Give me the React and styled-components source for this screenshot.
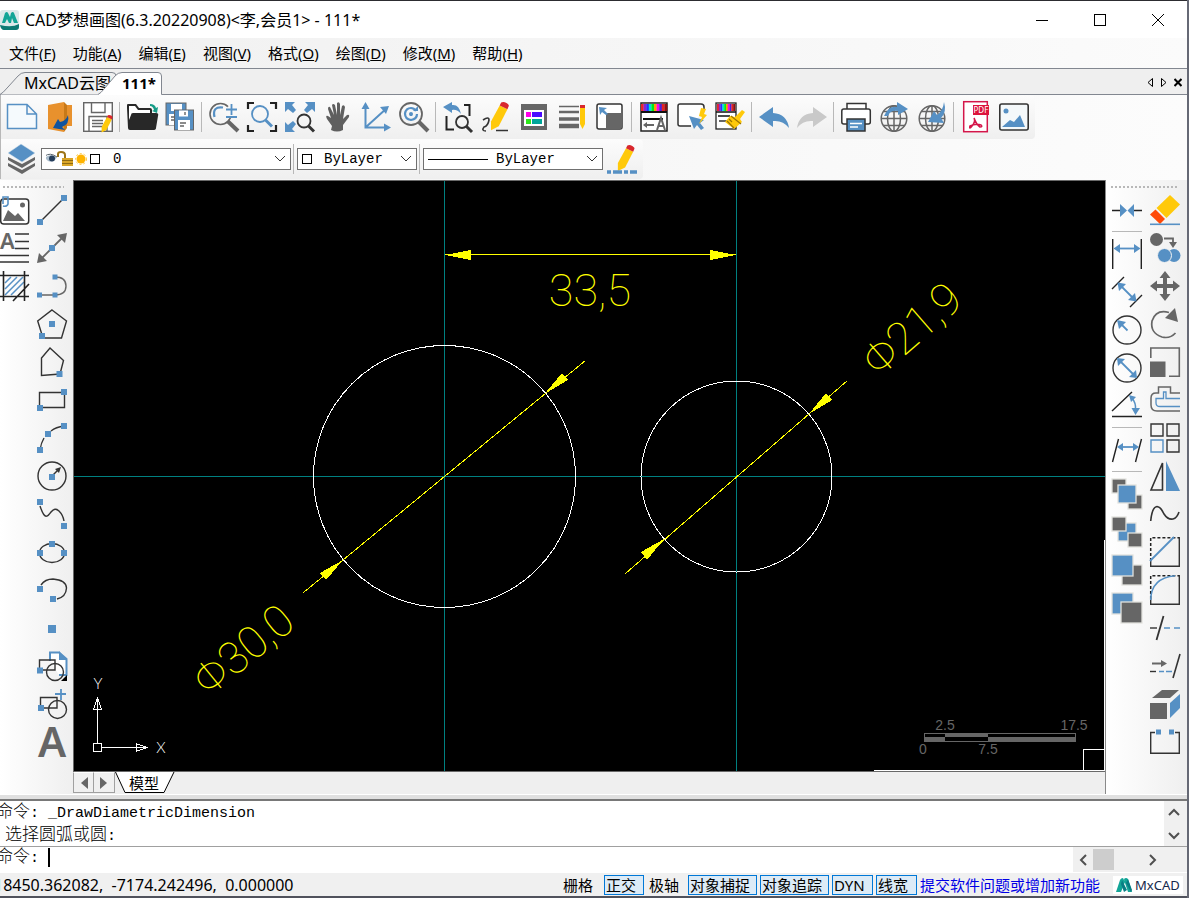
import React from 'react';
import styled, { createGlobalStyle, css } from 'styled-components';

const B = '#5690c4';
const G = '#666666';
const K = '#333333';
const UI = '"Noto Sans", "Noto Sans CJK SC", sans-serif';
const MONO = '"Liberation Mono", "Noto Sans CJK SC", monospace';

const GlobalStyle = createGlobalStyle`
  * { box-sizing: border-box; }
  html, body { margin: 0; }
  body { background: #666975; font-family: ${UI}; font-size: 16px; color: #000; }
  button, input, select, textarea { font: inherit; color: inherit; margin: 0; }
`;

/* ---------- window frame ---------- */

const Window = styled.div`
  display: flex;
  flex-direction: column;
  height: 100vh;
  min-height: 760px;
  margin-right: 2px;
  border-top: 1px solid #2c2c30;
  border-bottom: 2px solid #50525c;
  background: #f0f0f0;
  overflow: hidden;
`;

const TitleBar = styled.header`
  display: flex;
  align-items: center;
  height: 37px;
  flex: none;
  background: #fff;
`;

const Title = styled.h1`
  margin: 0;
  padding-left: 5px;
  flex: 1;
  font-size: 16px;
  line-height: 20px;
  font-weight: 400;
  white-space: nowrap;
`;

const WindowButton = styled.button`
  display: flex;
  align-items: center;
  justify-content: center;
  width: 58px;
  height: 37px;
  padding: 0;
  border: 0;
  background: transparent;
`;

const MenuBar = styled.nav`
  display: flex;
  align-items: center;
  gap: 17px;
  height: 31px;
  flex: none;
  padding-left: 9px;
  border-bottom: 1px solid #828790;
  background: linear-gradient(90deg, #f0f0f0, #fbfbfb);
`;

const MenuItem = styled.button`
  padding: 0;
  border: 0;
  background: transparent;
  font-size: 15px;
  line-height: 20px;
  white-space: nowrap;
`;

const TabStrip = styled.div`
  display: flex;
  align-items: flex-end;
  height: 26px;
  flex: none;
  border-bottom: 1px solid #828790;
  background: #efefef;
`;

const DocTab = styled.button`
  position: relative;
  height: 23px;
  width: ${(p) => p.$width}px;
  margin-bottom: -1px;
  margin-left: ${(p) => (p.$active ? -20 : 0)}px;
  padding: 0 0 2px 24px;
  border: 0;
  background: transparent;
  font-size: ${(p) => (p.$active ? 15 : 16)}px;
  line-height: 20px;
  font-weight: ${(p) => (p.$active ? 700 : 400)};
  text-align: left;
  white-space: nowrap;
  & > svg { position: absolute; left: 0; top: 0; }
  & > span { position: relative; }
`;

const TabTools = styled.div`
  display: flex;
  align-items: center;
  gap: 6px;
  height: 24px;
  margin-left: auto;
  padding-right: 5px;
`;

const TinyButton = styled.button`
  display: flex;
  padding: 0;
  border: 0;
  background: transparent;
`;

/* ---------- toolbars ---------- */

const ToolArea = styled.div`
  flex: none;
  padding-bottom: 1px;
  background: linear-gradient(90deg, #f2f2f2, #fcfcfc);
`;

const Toolbar = styled.div`
  display: flex;
  align-items: center;
  width: max-content;
  height: ${(p) => p.$height}px;
  padding-left: 3px;
  padding-right: 2px;
  border-radius: 0 4px 4px 0;
  background:
    linear-gradient(90deg, #b8b8b8 1px, transparent 1px),
    linear-gradient(#fcfcfc, #efefef);
`;

const Tool = styled.button`
  display: flex;
  align-items: center;
  justify-content: ${(p) => (p.$edge ? 'flex-start' : 'center')};
  width: ${(p) => (p.$edge ? 33 : 38)}px;
  height: 38px;
  padding: 0;
  border: 0;
  background: transparent;
  flex: none;
`;

const Divider = styled.span`
  flex: none;
  ${(p) =>
    p.$horizontal
      ? css`
          height: 6px;
          margin: 0 4px;
          background: linear-gradient(#b8b8b8, #b8b8b8) 0 2px / 100% 1px no-repeat;
        `
      : css`
          width: 6px;
          height: 30px;
          background: linear-gradient(#b8b8b8, #b8b8b8) 2px 0 / 1px 100% no-repeat;
        `}
`;

const Combo = styled.div`
  display: flex;
  align-items: center;
  width: ${(p) => p.$width}px;
  height: 22px;
  padding-left: 4px;
  border: 1px solid #707070;
  background: #fff;
  & > svg { flex: none; }
  & > svg:last-child { margin-right: 4px; pointer-events: none; }
`;

const ComboSelect = styled.select`
  flex: 1;
  min-width: 0;
  height: 20px;
  padding: 0 0 0 ${(p) => p.$pad}px;
  border: 0;
  outline: 0;
  appearance: none;
  background: transparent;
  font-family: ${MONO};
  font-size: 14px;
`;

/* ---------- work area ---------- */

const WorkArea = styled.main`
  display: flex;
  flex: 1;
  min-height: 0;
`;

const Dock = styled.aside`
  flex: none;
  width: ${(p) => p.$width}px;
  padding-left: ${(p) => p.$pad}px;
  background: linear-gradient(90deg, #fff, #efefef);
`;

const Grip = styled.div`
  height: 11px;
  margin: 0 9px 0 3px;
  background: linear-gradient(90deg, #b8b8b8 2px, transparent 2px) 0 6px / 4px 2px repeat-x;
`;

const DockColumns = styled.div`
  display: flex;
`;

const DockColumn = styled.div`
  display: flex;
  flex-direction: column;
`;

const Center = styled.section`
  display: flex;
  flex-direction: column;
  flex: 1;
  min-width: 0;
  border-right: 1px solid #8a8a8a;
`;

const Canvas = styled.div`
  position: relative;
  flex: 1;
  min-height: 0;
  overflow: hidden;
  border-top: 1px solid #696969;
  border-left: 1px solid #696969;
  border-bottom: 1px solid #696969;
  background: #000;
`;

const Drawing = styled.svg`
  position: absolute;
  inset: 0;
  width: 100%;
  height: 100%;
`;

const UcsIcon = styled.svg`
  position: absolute;
  left: 16px;
  bottom: 15px;
`;

const ScaleRuler = styled.svg`
  position: absolute;
  right: 0;
  bottom: 0;
`;

const SheetBar = styled.div`
  display: flex;
  height: 22px;
  flex: none;
  background: #efefef;
`;

const SheetArrow = styled.button`
  display: flex;
  align-items: center;
  justify-content: center;
  width: 21px;
  height: 21px;
  padding: 0 0 0 2px;
  border: 1px solid #a0a0a0;
  border-top-color: #fff;
  background: #f0f0f0;
  & + & { border-left: 0; padding: 0 2px 0 0; }
`;

const SheetTab = styled.button`
  position: relative;
  width: 62px;
  height: 21px;
  padding: 0 4px 0 0;
  border: 0;
  background: transparent;
  font-size: 15px;
  line-height: 20px;
  & > svg { position: absolute; left: 0; top: 0; }
  & > span { position: relative; }
`;

/* ---------- command line ---------- */

const Splitter = styled.div`
  height: 7px;
  flex: none;
  border-top: 1px solid #fff;
  border-bottom: 2px solid #787878;
  background: #e0e0e0;
`;

const LogRow = styled.div`
  display: flex;
  height: 46px;
  flex: none;
  border-bottom: 1px solid #a0a0a0;
  background: #fff;
`;

const Log = styled.div`
  flex: 1;
  padding-top: 1px;
  overflow: hidden;
  font-family: ${MONO};
  font-size: 15px;
  line-height: 22px;
  text-indent: -4px;
  white-space: pre;
`;

const Hanzi = styled.span`
  font-size: 17px;
  font-weight: 300;
`;

const LogScroll = styled.div`
  display: flex;
  flex-direction: column;
  justify-content: space-between;
  align-items: center;
  width: 23px;
  padding: 5px 4px 4px 0;
  background: #f0f0f0;
`;

const PromptRow = styled.div`
  display: flex;
  height: 25px;
  flex: none;
  background: #f0f0f0;
`;

const Prompt = styled.label`
  display: flex;
  flex: 1;
  overflow: hidden;
  background: #fff;
  font-family: ${MONO};
  font-size: 15px;
  line-height: 22px;
  text-indent: -4px;
  white-space: pre;
`;

const PromptInput = styled.input`
  flex: 1;
  height: 19px;
  margin-top: 1px;
  padding: 0;
  border: 0;
  border-left: 2px solid #000;
  outline: 0;
  background: transparent;
  text-indent: 0;
`;

const PromptScroll = styled.div`
  display: flex;
  align-items: center;
  width: 91px;
  margin-right: 23px;
  padding: 0 5px 0 4px;
`;

const Thumb = styled.span`
  width: 21px;
  height: 21px;
  margin-left: 4px;
  margin-right: auto;
  background: #cdcdcd;
`;

const StatusBar = styled.footer`
  display: flex;
  align-items: center;
  gap: 3px;
  height: 24px;
  flex: none;
  padding-right: 4px;
  border-top: 1px solid #fff;
  font-size: 15px;
  white-space: nowrap;
`;

const Coordinates = styled.output`
  flex: 1;
  min-width: 0;
  overflow: hidden;
  font-size: 16px;
  line-height: 20px;
  text-indent: -6px;
  white-space: pre;
`;

const Toggle = styled.button`
  width: ${(p) => p.$width}px;
  height: 20px;
  padding: 0 0 0 1px;
  border: 1px solid ${(p) => (p.$on ? '#0078d7' : 'transparent')};
  background: ${(p) => (p.$on ? '#dcebf7' : 'transparent')};
  font-size: 15px;
  line-height: 18px;
  text-align: left;
  overflow: hidden;
`;

const Feedback = styled.a`
  width: 190px;
  color: #0000e6;
  line-height: 20px;
  text-decoration: none;
`;

const Brand = styled.span`
  display: flex;
  align-items: center;
  gap: 3px;
  width: 70px;
  height: 18px;
  padding-left: 3px;
  background: #fff;
  color: #14284b;
  font-size: 13px;
  line-height: 18px;
`;

/* ---------- icon parts ---------- */

const Sq = ({ x, y, s = 6 }) => <rect x={x - s / 2} y={y - s / 2} width={s} height={s} fill={B} />;
const Box = ({ x, y, s, c }) => <rect x={x} y={y} width={s} height={s} fill={c} stroke="#e2e2de" strokeWidth="1.3" />;
const L = ({ d, c = K, w = 1.4, ...rest }) => <path d={d} fill="none" stroke={c} strokeWidth={w} {...rest} />;
const F = ({ d, c = B }) => <path d={d} fill={c} />;
const Circ = ({ x = 15, y = 15, r = 14, c = K, w = 1.4, f = 'none' }) => (
  <circle cx={x} cy={y} r={r} fill={f} stroke={c} strokeWidth={w} />
);
const Handle = ({ d }) => <path d={d} stroke={G} strokeWidth="4" />;
const Pencil = ({ s = 1, x = 0, y = 0 }) => (
  <g transform={`translate(${x} ${y}) scale(${s})`}>
    <F c="#ffc90a" d="M10 3.500L18 7.500L9 25L1 29V20Z" />
    <F c="#d8272d" d="M11.500 0.500Q14 -0.500 17 1Q20.500 3 19 5L18 7.500L10 3.500Z" />
  </g>
);
const Spectrum = ({ w }) => (
  <g>
    {['#e8252c', '#8a25d0', '#2530ff', '#00e4d2', '#00e817', '#ff9d00', '#ff00e8', '#4a22d8', '#e82020', '#8c1111'].map((c, i) => (
      <rect key={c} x={2 + (i * (w - 4)) / 10} y="2" width={(w - 4) / 10 + 0.2} height="7" fill={c} />
    ))}
  </g>
);
const Globe = () => (
  <g fill="none" stroke={G} strokeWidth="1.500">
    <circle cx="15" cy="16.500" r="12.800" />
    <ellipse cx="15" cy="16.500" rx="6.500" ry="12.800" />
    <path d="M15 4V29M2.200 16.500H28M4 9.500H26M4 23.500H26" />
  </g>
);

const ICONS = {
  newFile: <path d="M.5 2.5H20L29.500 12V26.500H.5ZM20 2.500V12H29.500" fill="#f5fafd" stroke={B} strokeWidth="1.500" />,
  open: <><F c="#e8912d" d="M3 3L19 0V30L3 27ZM19 3H27V24H19Z" /><F c="#c87918" d="M19 0L22 3V26L19 30Z" /><F c="#10539f" d="M23 13Q25 22 17 25L20 28L8 26L13 17L15 20Q21 19 23 13Z" /></>,
  save: <><rect x=".7" y=".7" width="28.600" height="28.600" fill="#fff" stroke={G} strokeWidth="1.400" /><L c={G} d="M8.500 1V10.500H22V1M6 29V14.500H24V29M9 18.500H20M9 21.500H20M9 24.500H20" /><Pencil s={0.6} x={18} y={13} /></>,
  folder: <><F c="#282828" d="M0 6V3Q0 2 1 2H9L12 6H23Q25 6 25 8V11H29Q32 11 31 14L29 26Q29 28 26 28H3Q1 28 1 26Z" /><F c="#fff" d="M2 4H8L11 8H23V11H6Q4 11 4 13L2 18Z" /><F c="#159c87" d="M23 2Q28 2 29 6L31 5L30 11L25 9L27 8Q26 4 23 4Z" /></>,
  saveAll: <><rect x="1" y="1" width="20" height="22" fill={B} stroke={G} /><rect x="6" y="2" width="11" height="7" fill="#fff" /><rect x="4" y="12" width="9" height="11" fill="#fff" /><L c={G} d="M6 15H9M6 18H9" /><rect x="9.500" y="8" width="19" height="20" fill={B} stroke={G} /><rect x="14" y="8.500" width="9" height="6" fill="#fff" /><rect x="13" y="18" width="12" height="10" fill="#fff" /><L c={G} d="M15 21H21M15 24H19M20 10V13" /></>,
  zoomPM: <><Circ x={11.500} y={12} r={10.500} c={G} w={1.600} /><L c={B} w={2.200} d="M5.500 15Q3 4 14 5.500" /><Handle d="M18.500 19L29 29" /><circle cx="23" cy="9" r="6" fill="#f8f8f8" /><L c={B} w={1.800} d="M22.500 2V13M17 7.500H28M17 15H28" /></>,
  zoomWin: <><L w={2.200} c="#222" d="M1 7V1H7M23 1H29V7M29 23V29H23M7 29H1V23" /><Circ x={13} y={12} r={8} c={B} w={1.800} /><path d="M18.500 18L25 24.500" stroke={B} strokeWidth="3" /></>,
  zoomExt: <><F d="M0 0H10L7 3L11 8L8 11L3 7L0 10ZM30 0H20L23 3L19 8L22 11L27 7L30 10ZM0 30H10L7 27L11 22L8 19L3 23L0 20Z" /><Circ x={19} y={19} r={6.500} w={1.800} /><path d="M23.500 24L29 29.500" stroke={K} strokeWidth="3" /></>,
  hand: <F c="#5f5f5f" d="M9 24L4 17Q2 13 5 14L8 16L5 7Q5 4 7 5L11 13L9 3Q10 1 12 3L14 13L14 1Q16 -1 17 2V13L19 4Q21 2 22 5L20 17L24 13Q27 12 26 15L20 23V28Q14 31 8 28Z" />,
  axes: <><L c={B} w={2} d="M4.500 3V25.500H27M5 25L26 6" /><F d="M.5 7L4.500 0L8.500 7ZM23 21.500L30 25.500L23 29.500ZM19 5L28 4L25 12Z" /></>,
  orbit: <><Circ x={12} y={12} r={11} c={G} w={1.800} /><L c={B} w={2.200} d="M18 12Q18 17 12 18Q6 17 6 11.500Q7 6 12 6Q15 6 17 9M12 11V14" /><F d="M14 9H19V4Z" /><circle cx="12" cy="12" r="2" fill={B} /><Handle d="M20 20L29 29" /></>,
  zoomPrev: <><L w={2} c="#222" d="M3.500 14V27.500H11M21 3H26.500V14" /><F d="M0 5L9 0V3Q16 2 18 12Q14 7 9 8V11Z" /><Circ x={19} y={20} r={6} w={1.800} /><path d="M23 24L29 30" stroke={K} strokeWidth="3" /></>,
  sketch: <><L d="M2 18Q8 14 8 18Q7 24 3 25Q0 29 5 29M15 28.500H27" w={1.600} /><Pencil x={9} s={0.97} /></>,
  props: <><rect x="2" y="2" width="26" height="26" fill={G} /><rect x="5" y="8" width="20" height="16" fill="#fff" /><rect x="7" y="10" width="5" height="5" fill="#ff00e8" /><rect x="13" y="10" width="10" height="5" fill="#4b0cff" /><rect x="7" y="17" width="5" height="5" fill="#2de81b" /><rect x="13" y="17" width="10" height="5" fill="#00a69a" /></>,
  linetype: <><L c={G} w={1.500} d="M2 4.500H22" /><L c={G} w={2.500} d="M2 10H22" /><L c={G} w={3.500} d="M2 17H22" /><L c={G} w={4.500} d="M2 24H22" /><F c="#ffc90a" d="M23 6H28V22L25.500 27L23 22Z" /><F c="#d8272d" d="M23 3H28V6H23Z" /></>,
  viewport: <><rect x="2" y="2" width="25" height="25" rx="2" fill="#fff" stroke={K} strokeWidth="1.500" /><F c={G} d="M11 11H27V25Q27 27 25 27H11Z" /><F d="M4 5L12 6L9 8L13 12L11 13L7 10L5 13Z" /></>,
  colorText: <><rect x="2" y="1" width="26" height="28" fill="#fff" stroke="#222" strokeWidth="1.500" /><Spectrum w={30} /><L c="#111" w={1.800} d="M2 10H28M4 17H24" /><L c={G} w={2} d="M7 23H15" /><F c={G} d="M4 23L8 20V26Z" /><L c={G} w={2} d="M18 28L22 16L26 28M19 24H25" /></>,
  quickSelect: <><path d="M14 24H3Q1 24 1 22V4Q1 2 3 2H24Q27 2 27 5V8" fill="#fff" stroke={K} strokeWidth="1.500" /><F d="M12 14L27 18L23 21L27 26L24 28L20 23L17 27Z" /><F c="#ffc90a" d="M24 6L22 14L25 15L22 22L30 13L27 12L29 7Z" /></>,
  matchProps: <><rect x="1" y="1" width="20" height="26" fill="#fff" stroke="#222" strokeWidth="1.300" /><Spectrum w={22} /><L c="#111" d="M1 10H21M3 14H15" /><L c={G} w={2} d="M4 19H13" /><F c="#ffc90a" d="M27 8L30 10L25 17L27 20L19 27L10 20L15 14L20 15Z" /><L c="#9b7300" d="M16 14L26 22M12 19L19 26M14 17L17 20" w={1.200} /></>,
  undo: <F d="M0 15L14 5V11Q28 12 30 26Q24 18 14 19V25Z" />,
  redo: <F c="#c9c9c9" d="M30 15L16 5V11Q2 12 0 26Q6 18 16 19V25Z" />,
  print: <><rect x="6" y="1.500" width="19" height="8" fill="#fff" stroke={K} strokeWidth="1.500" /><rect x=".8" y="7" width="28.500" height="15" rx="2" fill="#fff" stroke={K} strokeWidth="1.500" /><rect x="6" y="17" width="18" height="12" fill={B} stroke={K} strokeWidth="1.500" /><L c="#fff" d="M9 21.500H21M9 25H17" /></>,
  globeOut: <><Globe /><F d="M5 14Q10 3 18 5V0L29 7L19 13V9Q11 8 9 14Z" /></>,
  globeIn: <><Globe /><F d="M27 0Q30 10 24 16L27 21L11 20L17 9L20 13Q26 9 27 0Z" /></>,
  pdf: <><rect x="2.700" y="-.3" width="23.600" height="30" fill="#fff" stroke="#d4164a" strokeWidth="1.500" /><rect x="12" y="3" width="16" height="10" fill="#dc143c" /><text x="12.500" y="11" fontSize="8" fill="#fff" fontFamily="Noto Sans">PDF</text><L c="#d4164a" w={1.600} d="M13 16Q15 19 11 24Q8 28 9 24Q15 21 20 23Q22 25 19 25Q15 22 13 16" /></>,
  picture: <><rect x=".8" y="2" width="28.400" height="26" rx="2" fill="#f4f8fa" stroke={K} strokeWidth="1.600" /><circle cx="7" cy="9" r="2.500" fill={B} /><F d="M3 25L11 18L15 20L21 13L26 25Z" /></>,
  layers: <><F c={G} d="M1 19L15 26L28 19V22L15 30L1 22ZM1 13L15 20L28 13V16L15 24L1 16Z" /><path d="M1 9L14 0L28 9L15 18Z" fill={B} stroke="#dbe6ee" strokeWidth=".5" /></>,
  lineEdit: <><Pencil x={10} y={1} s={0.9} /><path d="M0 28H30" stroke={B} strokeWidth="3.500" strokeDasharray="4 2 9 2" /></>,

  imageRef: <><rect x=".7" y="4" width="28" height="25" rx="3" fill="#fff" stroke={K} strokeWidth="1.500" /><circle cx="22.500" cy="10" r="2.500" fill={G} /><F c={G} d="M3 26L8 15L15 21L18 18L25 26Z" /><L c={B} d="M3 9V2H8V9Q7 12 3 11" w={1.600} /></>,
  mtext: <><text x="0" y="16" fontSize="22" fontWeight="600" fill={G} fontFamily="Noto Sans">A</text><L d="M15 1H29M15 8.500H29M15 15.500H29M0 22.500H29M0 29H29" w={1.600} /></>,
  hatch: <><L c={B} w={1.500} d="M5 12L11 6M5 18L17 6M5 24L23 6M11 24L24 11" /><L w={1.600} c="#222" d="M0 4.500H29M0 25.500H29M3.500 0V30M24.500 0V30M13 30L29 13" /></>,
  line: <><L d="M3 27L27 3" /><Sq x={3} y={27} /><Sq x={27} y={3} /></>,
  ray: <><L c={G} d="M3 27L27 3" w={1.800} /><F c={G} d="M0 30L2 20L10 28ZM30 0L28 10L20 2Z" /><Sq x={15} y={15} /></>,
  pline: <><L c={G} d="M2 24H18M18 6Q29 6 29 15Q29 24 18 24" /><Sq x={2.500} y={24} s={5} /><Sq x={18} y={24} s={5} /><Sq x={18} y={6} s={5} /></>,
  pentagon: <><L d="M15 1L29.500 12L24.500 29H6L.7 12Z" /><Sq x={15} y={15} /><Sq x={5} y={27} /></>,
  polygon: <><L d="M13 1L26.500 13.500L23 27L4.500 28.500V11Z" /><Sq x={22.500} y={27} /></>,
  rect: <><L d="M2.500 7.500H27.500V22.500H2.500Z" /><Sq x={27} y={7} /><Sq x={3} y={23} /></>,
  arc: <><L d="M3 27Q4 20 7 15M14 8Q19 4 27 3" /><Sq x={3} y={27} /><Sq x={11} y={11} /><Sq x={27} y={3} /></>,
  circle: <><Circ /><L d="M15 15L22 8" /><F c={K} d="M24 6L18 8L22 12Z" /><Sq x={15} y={16} /></>,
  spline: <><L d="M3 7Q7 19 10 17Q11 17 14 13Q18 8 22 12Q26 16 27 22" /><Sq x={3} y={3} /><Sq x={27} y={27} /></>,
  ellipse: <><ellipse cx="15" cy="16" rx="12.500" ry="9.500" fill="none" stroke={K} strokeWidth="1.400" /><Sq x={3} y={16} /><Sq x={27} y={16} /><Sq x={15} y={7} /></>,
  ellipseArc: <><L d="M4 10Q8 4 16 4Q29 5 29.500 13Q29 22 20 24" /><Sq x={3} y={14} /><Sq x={16} y={24} /></>,
  point: <Sq x={15} y={16} s={8} />,
  insertBlock: <><path d="M13 10V1.500H22L29.500 8V24H22" fill="#fff" stroke={B} strokeWidth="2" /><F d="M22 0L30 9H22Z" /><L d="M3 19H18V9H2.500V19" /><Circ x={18} y={21} r={8.500} /><F c="#000" d="M30 24V30H24Z" /><Sq x={3} y={19.500} /></>,
  makeBlock: <><L d="M4 19H20V8.500H3.500V19" /><Circ x={20.500} y={20.500} r={9} /><L c={B} w={1.800} d="M24 0V11M18 5H29" /><Sq x={4} y={19} /></>,
  text: <text x="15" y="30" textAnchor="middle" fontSize="42" fontWeight="600" fill={G} fontFamily="Noto Sans">A</text>,

  join: <><L w={1.600} c="#222" d="M0 15.500H9M21 15.500H30" /><F d="M8 9L15 15.500L8 22ZM22 9L15.500 15.500L22 22Z" /></>,
  dimLinear: <><L d="M.7 0V30M29.300 0V30" w={1.400} c="#222" /><L c={B} w={1.800} d="M6 9.500H24" /><F d="M1.500 9.500L8 5V14ZM28.500 9.500L22 5V14Z" /></>,
  dimAligned: <><L d="M0 12L12 0M18 30L30 18" w={1.400} c="#222" /><L c={B} w={1.800} d="M8 8L22 22" /><F d="M5.500 5.500L14 7L7 14ZM24.500 24.500L23 16L16 23Z" /></>,
  dimRadius: <><Circ /><L c={B} w={1.800} d="M15.500 15.500L8 8" /><F d="M5 5L14 7L7 14Z" /></>,
  dimDiameter: <><Circ /><L c={B} w={1.800} d="M8 8L22 22" /><F d="M5 5L13 6L6 13ZM25 25L24 17L17 24Z" /></>,
  dimAngle: <><L d="M0 20L20 1M0 25.500H30" w={1.400} c="#222" /><L c={B} w={1.500} d="M20 7Q24 12 23.500 18" /><F d="M17 4L24 6L19 11ZM23.500 24L19.500 17H28Z" /></>,
  dimOblique: <><L d="M.5 27L6.500 4M23.500 27L29.500 4" w={1.400} c="#222" /><L c={B} w={1.800} d="M8 12H24" /><F d="M5 12L11 8V16ZM27 12L21 8V16Z" /></>,
  orderA: <><Box x={0} y={0} s={14} c={G} /><Box x={16} y={16} s={14} c={G} /><Box x={6} y={6} s={18} c={B} /></>,
  orderB: <><Box x={6} y={6} s={18} c={B} /><Box x={0} y={0} s={14} c={G} /><Box x={16} y={16} s={14} c={G} /></>,
  orderC: <><Box x={10} y={10} s={20} c={G} /><Box x={0} y={0} s={21} c={B} /></>,
  orderD: <><Box x={0} y={0} s={21} c={B} /><Box x={9} y={9} s={21} c={G} /></>,
  erase: <><F c="#ffc90a" d="M20 0L30 9.500L16.500 23L6.500 13Z" /><F c="#ff4a08" d="M5.500 14.500L15 24L10 29L0 19.500Z" /><L c={B} w={1.600} d="M0 29.300H30" /></>,
  copy: <><circle cx="6.500" cy="6.500" r="6.500" fill={G} /><L c={G} d="M14 5.500H23V10" w={1.800} /><F c={G} d="M19 9H27L23 15Z" /><circle cx="24" cy="22.500" r="6.500" fill={B} /><circle cx="14.500" cy="22.500" r="7" fill={B} stroke="#f3f3f3" strokeWidth="1" /></>,
  move: <F c={G} d="M15 0L20.500 7H17V13H23V9.500L30 15L23 20.500V17H17V23H20.500L15 30L9.500 23H13V17H7V20.500L0 15L7 9.500V13H13V7H9.500Z" />,
  rotate: <><L c={G} w={1.700} d="M19 3.500Q6 0 2 12Q0 24 12 28Q20 30 25.500 24" /><F c={G} d="M25 -1L28 13L15 9Z" /></>,
  scale: <><L w={1.600} d="M.8 11V1H29.300V29.300H19" c={G} /><rect x="0" y="14.500" width="15.500" height="15.500" fill={G} /></>,
  offset: <><L c={G} d="M30 8H20.500V2H8.500V8H6Q1 8 1 13V20Q1 26 7 26H30" w={1.500} /><L c={B} d="M30 13.500H16V7H13.500V13.500H6V18Q6 21.500 10 21.500H30" w={1.300} /></>,
  array: <><L d="M1 1H13V13H1ZM17 1H29V13H17ZM17 17H29V29H17Z" /><L c={B} d="M1 17H13V29H1Z" /></>,
  mirror: <><L d="M12.500 2V29H1Z" w={1.600} /><F d="M16 0L30 30H16Z" /></>,
  curve: <><path d="M.7 22Q2 8 7 7.500Q11 8 14 15Q18 21 23 20Q27 19 29 13" fill="none" stroke={K} strokeWidth="1.600" /></>,
  chamfer: <><L d="M29.300 0V29.300H.7V24" /><path d="M.7 24V.7H29" fill="none" stroke="#222" strokeWidth="1.500" strokeDasharray="3 2" /><L c={B} w={1.800} d="M0 24L24 0" /></>,
  fillet: <><L d="M29.300 0V29.300H.7V24" /><path d="M.7 24V.7H29" fill="none" stroke="#222" strokeWidth="1.500" strokeDasharray="3 2" /><L c={B} w={1.600} d="M.7 25Q1 3 25 .7" /></>,
  break: <><L d="M6.500 27L13.500 3" w={1.800} /><L d="M0 15H7" /><L c={B} d="M14 15H20M24 15H30" w={1.600} /></>,
  extend: <><L d="M23 27L30 3" w={1.600} /><L d="M0 20.500H6" /><L c={B} d="M9 20.500H14M16 20.500H22" /><L c={G} w={2} d="M2 12.500H13" /><F c={G} d="M17 12.500L11 9V16Z" /></>,
  solid: <><F c={G} d="M0 14H17V30H0ZM2 9L12 1H29L20 9Z" /><F d="M20 14L30 5V19L20 29Z" /></>,
  breakBox: <><L d="M5 5.500H.7V26.300H29.300V5.500H25" /><Sq x={8.500} y={5} s={5} /><Sq x={21.500} y={5} s={5} /></>,
};

const Icon = ({ name }) => (
  <svg width="30" height="30" viewBox="0 0 30 30" overflow="visible" aria-hidden="true">
    {ICONS[name]}
  </svg>
);

const ToolList = ({ items, edge, horizontal }) =>
  items.map((name, i) =>
    name === '|' ? (
      <Divider key={i} $horizontal={horizontal} />
    ) : (
      <Tool key={i} $edge={edge} type="button" aria-label={name}>
        <Icon name={name} />
      </Tool>
    )
  );

const Logo = ({ size = 16 }) => (
  <svg width={size} height={size} viewBox="0 0 16 16" aria-hidden="true">
    <F c="#12a597" d="M0 15L4 3Q5 1 7 1L9 5L5 15H3ZM8 2Q10 0 12 2L16 15H12L9 6Z" />
    <F c="#087c84" d="M6 3L11 13L8 15L5 7ZM12 2L16 13L15 15L10 6Z" />
  </svg>
);

const AppIcon = () => (
  <svg width="20" height="20" viewBox="0 0 20 20" aria-hidden="true">
    <rect x="0" y="0" width="19" height="19" rx="3" fill="#dce9ea" />
    <F c="#12a597" d="M2 13L5 3Q7 1 8 3L10 7L11 3Q13 1 14 3L18 13H14L12 8L11 13H9L7 9L5 13Z" />
    <F c="#0d7a74" d="M0 15Q12 18 19 14V17Q19 20 16 20H4Q1 20 0 15Z" />
  </svg>
);

const Chevron = ({ dir = 'down', w = 12, heavy, label }) => {
  const d = { down: 'M1 3L6 8L11 3', up: 'M1 9L6 4L11 9', left: 'M9 1L4 6L9 11', right: 'M3 1L8 6L3 11' }[dir];
  return (
    <svg width={w} height={w} viewBox="0 0 12 12" aria-label={label}>
      <path d={d} fill="none" stroke={heavy ? '#505050' : '#333'} strokeWidth={heavy ? 2 : 1} />
    </svg>
  );
};

const LayerMarks = () => (
  <svg width="58" height="16" viewBox="2 0 58 16" aria-hidden="true">
    <path d="M1 7Q5 2 13 6Q10 12 4 10Z" fill="#a9bccb" />
    <circle cx="8" cy="7.500" r="3" fill="#253e5c" />
    <path d="M1 5Q6 1 13 6" fill="none" stroke="#5b6670" />
    <path d="M14 6V3Q14 1 17 1Q21 1 21 4V7" fill="none" stroke="#9c7418" strokeWidth="2" />
    <rect x="18" y="7" width="11" height="8" fill="#d9a527" />
    <path d="M18 9.500H29M18 12.500H29" stroke="#8f6a12" />
    <circle cx="37" cy="8" r="4.500" fill="#ffb400" />
    <circle cx="37" cy="8" r="5.500" fill="none" stroke="#ffc83a" strokeDasharray="2 2" />
    <rect x="46.500" y="3.500" width="9" height="9" fill="#fff" stroke="#000" />
  </svg>
);

/* ---------- data ---------- */

const MENUS = [['文件', 'F'], ['功能', 'A'], ['编辑', 'E'], ['视图', 'V'], ['格式', 'O'], ['绘图', 'D'], ['修改', 'M'], ['帮助', 'H']];
const TOP_TOOLS = 'newFile open save | folder saveAll | zoomPM zoomWin zoomExt hand axes orbit | zoomPrev sketch props linetype viewport | colorText quickSelect matchProps | undo redo | print globeOut globeIn | pdf picture'.split(' ');
const REF_TOOLS = ['imageRef', 'mtext', 'hatch'];
const DRAW_TOOLS = 'line ray pline pentagon polygon rect arc circle spline ellipse ellipseArc point insertBlock makeBlock text'.split(' ');
const DIM_TOOLS = 'join | dimLinear dimAligned dimRadius dimDiameter dimAngle | dimOblique | orderA orderB orderC orderD'.split(' ');
const EDIT_TOOLS = 'erase copy move rotate scale offset array mirror curve chamfer fillet break extend solid breakBox'.split(' ');
const TOGGLES = [['栅格', 40, false], ['正交', 40, true], ['极轴', 38, false], ['对象捕捉', 69, true], ['对象追踪', 69, true], ['DYN', 41, true], ['线宽', 41, true]];

const DimText = ({ x, y, angle = 0, children }) => (
  <text
    transform={`translate(${x} ${y}) rotate(${angle})`}
    textAnchor="middle"
    fontFamily="Roboto, Lato, sans-serif"
    fontWeight="100"
    fontSize="45"
    fill="#ff0"
  >
    {children}
  </text>
);

const Plan = () => (
  <Drawing aria-label="drawing">
    <g stroke="#008080" shapeRendering="crispEdges">
      <line x1="370.500" y1="0" x2="370.500" y2="100%" />
      <line x1="662.500" y1="0" x2="662.500" y2="100%" />
      <line x1="0" y1="295.500" x2="100%" y2="295.500" />
    </g>
    <g transform="translate(-74 -181)">
      <g fill="none" stroke="#fff" shapeRendering="crispEdges">
        <circle cx="444.500" cy="476.500" r="131" />
        <circle cx="736.500" cy="476.500" r="95.500" />
      </g>
      <g fill="#ff0" stroke="#ff0" shapeRendering="crispEdges">
        <path d="M445 254.500H736M303.500 592.500L585.500 360.500M625.500 573.500L847.500 380.500" />
        <g stroke="none">
          <path d="M445 255L471 250V260ZM736 255L710 250V260Z" />
          <path d="M545 393.500L562 373L568 380ZM343 560L320 573L326 580Z" />
          <path d="M809 414L826 393L832 400ZM664 539L641 552L647 560Z" />
        </g>
      </g>
      <DimText x={590} y={306}>33,5</DimText>
      <DimText x={253} y={662} angle={-39}>Φ30,0</DimText>
      <DimText x={922} y={341} angle={-41}>Φ21,9</DimText>
    </g>
  </Drawing>
);

const Ucs = () => (
  <UcsIcon width="80" height="88" viewBox="90 669 80 88" aria-hidden="true">
    <g fill="none" stroke="#fff" shapeRendering="crispEdges">
      <path d="M93.500 744.500H101.500V752.500H93.500ZM97.500 744V698M102 748.500H147" />
      <path d="M97.500 699L93.500 710H101.500ZM147 748.500L136 744.500V752.500Z" />
    </g>
    <g fill="#fff" fontFamily="Lato, sans-serif" fontWeight="300" fontSize="15" textAnchor="middle">
      <text x="98" y="690">Y</text>
      <text x="161" y="754">X</text>
    </g>
  </UcsIcon>
);

const Ruler = () => (
  <ScaleRuler width="231" height="231" viewBox="874 541 231 231">
    <g shapeRendering="crispEdges">
      <path d="M874 771.500H1104.500V541M1083.500 771V750.500H1104" fill="none" stroke="#fff" />
      <rect x="924" y="734" width="152" height="9" fill={G} />
      <rect x="925" y="735" width="20" height="3" fill="#000" />
      <rect x="988" y="735" width="87" height="3" fill="#000" />
      <rect x="945" y="738" width="43" height="4" fill="#000" />
    </g>
    <g fill={G} fontFamily="Liberation Sans, sans-serif" fontSize="14" textAnchor="middle">
      <text x="945" y="731">2.5</text>
      <text x="1074" y="731">17.5</text>
      <text x="923" y="755">0</text>
      <text x="988" y="755">7.5</text>
    </g>
  </ScaleRuler>
);

export default function App() {
  return (
    <>
      <GlobalStyle />
      <Window>
        <TitleBar>
          <AppIcon />
          <Title>CAD梦想画图(6.3.20220908)&lt;李,会员1&gt; - 111*</Title>
          <WindowButton type="button" aria-label="Minimize"><svg width="12" height="12"><path d="M0 6.500H12" stroke="#000" /></svg></WindowButton>
          <WindowButton type="button" aria-label="Maximize"><svg width="12" height="12"><rect x=".5" y=".5" width="11" height="11" fill="none" stroke="#000" /></svg></WindowButton>
          <WindowButton type="button" aria-label="Close"><svg width="12" height="12"><path d="M0 0L12 12M12 0L0 12" stroke="#000" /></svg></WindowButton>
        </TitleBar>

        <MenuBar>
          {MENUS.map(([name, key]) => (
            <MenuItem key={key} type="button">{name}(<u>{key}</u>)</MenuItem>
          ))}
        </MenuBar>

        <TabStrip>
          <DocTab type="button" $width={118}>
            <svg width="118" height="23"><path d="M0 22.500Q3 21 8 15L18 4Q21 .5 25 .5H112Q116 .5 116 4V22.500" fill="#efefef" stroke="#828790" /></svg>
            <span>MxCAD云图</span>
          </DocTab>
          <DocTab type="button" $width={65} $active>
            <svg width="65" height="23"><path d="M0 22.500Q3 21 6 17L17 4Q20 .5 24 .5H60Q63.500 .5 63.500 4V23H0Z" fill="#fff" /><path d="M0 22.500Q3 21 6 17L17 4Q20 .5 24 .5H60Q63.500 .5 63.500 4V22.500" fill="none" stroke="#828790" /></svg>
            <span>111*</span>
          </DocTab>
          <TabTools>
            <TinyButton type="button" aria-label="Previous tab"><svg width="8" height="9"><path d="M6.500 .5V8.500L2 4.500Z" fill="none" stroke="#000" /></svg></TinyButton>
            <TinyButton type="button" aria-label="Next tab"><svg width="8" height="9"><path d="M1.500 .5V8.500L6 4.500Z" fill="none" stroke="#000" /></svg></TinyButton>
            <TinyButton type="button" aria-label="Close tab"><svg width="8" height="9"><path d="M.5 1L7.500 8M7.500 1L.5 8" stroke="#000" strokeWidth="2" /></svg></TinyButton>
          </TabTools>
        </TabStrip>

        <ToolArea>
          <Toolbar $height={44}>
            <ToolList items={TOP_TOOLS} />
          </Toolbar>
          <Toolbar $height={40}>
            <Tool type="button" aria-label="layers"><Icon name="layers" /></Tool>
            <Combo $width={250}>
              <LayerMarks />
              <ComboSelect $pad={9} defaultValue="0" aria-label="Layer"><option>0</option></ComboSelect>
              <Chevron />
            </Combo>
            <Divider />
            <Combo $width={120}>
              <svg width="14" height="14"><rect x=".5" y="2.500" width="9" height="9" fill="#fff" stroke="#000" /></svg>
              <ComboSelect $pad={8} defaultValue="ByLayer" aria-label="Colour"><option>ByLayer</option></ComboSelect>
              <Chevron />
            </Combo>
            <Divider />
            <Combo $width={180}>
              <svg width="62" height="2"><rect width="60" height="1" y="1" fill="#000" /></svg>
              <ComboSelect $pad={6} defaultValue="ByLayer" aria-label="Line type"><option>ByLayer</option></ComboSelect>
              <Chevron />
            </Combo>
            <Tool type="button" aria-label="edit line"><Icon name="lineEdit" /></Tool>
          </Toolbar>
        </ToolArea>

        <WorkArea>
          <Dock $width={73} $pad={0}>
            <Grip />
            <DockColumns>
              <DockColumn><ToolList items={REF_TOOLS} edge /></DockColumn>
              <DockColumn><ToolList items={DRAW_TOOLS} /></DockColumn>
            </DockColumns>
          </Dock>
          <Center>
            <Canvas>
              <Plan />
              <Ucs />
              <Ruler />
            </Canvas>
            <SheetBar>
              <SheetArrow type="button" aria-label="Previous sheet"><svg width="8" height="12"><path d="M7 0V12L0 6Z" fill={G} /></svg></SheetArrow>
              <SheetArrow type="button" aria-label="Next sheet"><svg width="8" height="12"><path d="M1 0V12L8 6Z" fill={G} /></svg></SheetArrow>
              <SheetTab type="button">
                <svg width="62" height="21"><path d="M.5 0L10 20.500H49L59 0Z" fill="#fff" /><path d="M.5 0L10 20.500H49L59 0" fill="none" stroke="#000" /></svg>
                <span>模型</span>
              </SheetTab>
            </SheetBar>
          </Center>
          <Dock $width={81} $pad={2}>
            <Grip />
            <DockColumns>
              <DockColumn><ToolList items={DIM_TOOLS} horizontal /></DockColumn>
              <DockColumn><ToolList items={EDIT_TOOLS} /></DockColumn>
            </DockColumns>
          </Dock>
        </WorkArea>

        <Splitter />
        <LogRow>
          <Log>
            <div><Hanzi>命令</Hanzi>: _DrawDiametricDimension</div>
            <div> <Hanzi>选择圆弧或圆</Hanzi>:</div>
          </Log>
          <LogScroll>
            <TinyButton type="button" aria-label="Scroll up"><Chevron dir="up" heavy /></TinyButton>
            <TinyButton type="button" aria-label="Scroll down"><Chevron dir="down" heavy /></TinyButton>
          </LogScroll>
        </LogRow>
        <PromptRow>
          <Prompt>
            <span><Hanzi>命令</Hanzi>: </span>
            <PromptInput type="text" />
          </Prompt>
          <PromptScroll>
            <TinyButton type="button" aria-label="Scroll left"><Chevron dir="left" heavy /></TinyButton>
            <Thumb />
            <TinyButton type="button" aria-label="Scroll right"><Chevron dir="right" heavy /></TinyButton>
          </PromptScroll>
        </PromptRow>

        <StatusBar>
          <Coordinates>18450.362082,  -7174.242496,  0.000000</Coordinates>
          {TOGGLES.map(([label, width, on]) => (
            <Toggle key={label} type="button" $width={width} $on={on} aria-pressed={on}>{label}</Toggle>
          ))}
          <Feedback href="#feedback">提交软件问题或增加新功能</Feedback>
          <Brand><Logo />MxCAD</Brand>
        </StatusBar>
      </Window>
    </>
  );
}
